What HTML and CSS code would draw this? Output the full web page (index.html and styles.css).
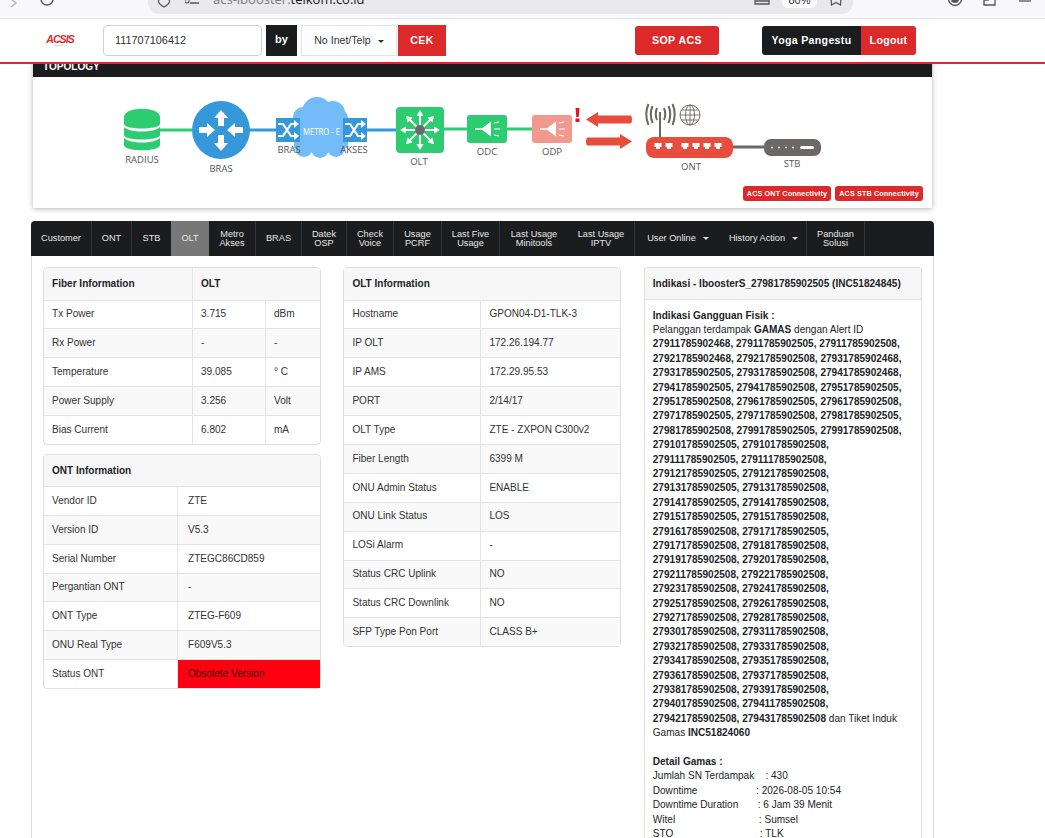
FILE: index.html
```html
<!DOCTYPE html>
<html lang="id">
<head>
<meta charset="utf-8">
<title>ACSIS - OLT</title>
<link rel="stylesheet" href="styles.css">
</head>
<body>
<div class="browser">
  <svg class="b-icon b-back" width="12" height="18" viewBox="0 0 12 18"><path d="M3 -1 L8 3 L3 7" fill="none" stroke="#b5b5ba" stroke-width="1.4"/></svg>
  <svg class="b-icon b-reload" width="16" height="18" viewBox="0 0 16 18"><circle cx="8" cy="-1" r="6" fill="none" stroke="#55555a" stroke-width="1.4"/></svg>
  <div class="urlbar">
    <svg class="b-icon b-shield" width="14" height="14" viewBox="0 0 14 14"><path d="M1.500 -2 H12.500 V1 Q12.500 4 7 7 Q1.500 4 1.500 1 Z" fill="none" stroke="#55555a" stroke-width="1.300"/></svg>
    <svg class="b-icon b-lock" width="14" height="14" viewBox="0 0 14 14"><path d="M5 3 H14 M5 -1 H10" fill="none" stroke="#55555a" stroke-width="1.300"/><circle cx="2" cy="1" r="2" fill="none" stroke="#55555a" stroke-width="1.100"/></svg>
    <span class="url"><span class="url-dim">acs-ibooster.</span>telkom.co.id</span>
    <svg class="b-icon b-reader" width="16" height="14" viewBox="0 0 16 14"><path d="M1 -2 V4 H15 V-2 M1 1 H15" fill="none" stroke="#55555a" stroke-width="1.300"/></svg>
    <span class="zoom-pill">80%</span>
    <svg class="b-icon b-star" width="14" height="14" viewBox="0 0 14 14"><path d="M2 -3 L2.500 5 L7 2.500 L11.500 5 L12 -3" fill="none" stroke="#55555a" stroke-width="1.300"/></svg>
  </div>
  <svg class="b-icon b-avatar" width="16" height="18" viewBox="0 0 16 18"><circle cx="8" cy="-1" r="6.500" fill="none" stroke="#55555a" stroke-width="1.400"/><circle cx="8" cy="-1" r="4" fill="#55555a"/></svg>
  <svg class="b-icon b-ext" width="14" height="18" viewBox="0 0 14 18"><path d="M1 0 V5 H12 V-2 M1 0 H5 V-3" fill="none" stroke="#55555a" stroke-width="1.300"/></svg>
  <svg class="b-icon b-menu" width="14" height="18" viewBox="0 0 14 18"><path d="M1 1 H13" fill="none" stroke="#55555a" stroke-width="1.300"/></svg>
</div>

<header class="topbar">
  <div class="logo"><span class="logo-text">ACSIS</span><span class="logo-sub"></span></div>
  <div class="search-input">111707106412</div>
  <div class="by">by</div>
  <div class="select">No Inet/Telp<span class="caret caret-dark"></span></div>
  <div class="btn btn-cek">CEK</div>
  <div class="btn btn-sop">SOP ACS</div>
  <div class="user">Yoga Pangestu</div>
  <div class="btn btn-logout">Logout</div>
</header>

<main class="page">
  <section class="topology">
    <h2 class="topology-title">TOPOLOGY</h2>
    <div class="topology-body">
      <svg class="diagram" width="899" height="131" viewBox="33 77 899 131">
        <defs>
          <path id="arrow" d="M0 -8 L7 0 H3 V8 H-3 V0 H-7 Z" fill="#fff"/>
          <path id="thin" d="M-1 0 V-14 H-3.500 L0 -20 L3.500 -14 H1 V0 Z" fill="#fff"/>
          <g id="switch">
            <rect x="-12" y="-12" width="24" height="24" fill="#3498db"/>
            <path d="M-10 -6 H-5 L3 6 H7 M-10 6 H-5 L3 -6 H7" fill="none" stroke="#fff" stroke-width="2.200"/>
            <path d="M6 -10 L11 -6 L6 -2 Z M6 2 L11 6 L6 10 Z" fill="#fff"/>
          </g>
          <g id="horn">
            <path d="M-12 -0.800 H-5 L4 -7.500 V7.500 L-5 0.800 H-12 Z" fill="#fff"/>
            <path d="M7 -6 L12 -7 M7 0 H13 M7 6 L12 7" stroke="#fff" stroke-width="1.100"/>
          </g>
          <path id="port" d="M-3.500 -3 H3.500 V1 H2 V3 H-2 V1 H-3.500 Z" fill="#fff"/>
        </defs>

        <path class="link-green" d="M160 130 H192"/>
        <path class="link-blue" d="M249 130 H396"/>
        <path class="link-green" d="M444 129 H532"/>
        <path class="link-gray" d="M733 147 H765"/>

        <g class="cylinder">
          <path d="M124 117 C124 106 160 106 160 117 V124 C160 130 124 130 124 124 Z"/>
          <path d="M124 127 C130 133 154 133 160 127 V135 C160 141 124 141 124 135 Z"/>
          <path d="M124 138 C130 144 154 144 160 138 V145 C160 152 124 152 124 145 Z"/>
        </g>
        <text class="label" x="142" y="163">RADIUS</text>

        <circle cx="221" cy="130" r="29" fill="#3498db"/>
        <use href="#arrow" transform="translate(221 118)"/>
        <use href="#arrow" transform="translate(221 143) rotate(180)"/>
        <use href="#arrow" transform="translate(207 130) rotate(90)"/>
        <use href="#arrow" transform="translate(235 130) rotate(-90)"/>
        <text class="label" x="221" y="172">BRAS</text>

        <g class="cloud">
          <circle cx="317" cy="112" r="15"/>
          <circle cx="303" cy="117" r="10"/>
          <circle cx="333" cy="113" r="12"/>
          <circle cx="340" cy="118" r="8"/>
          <circle cx="304" cy="148" r="9"/>
          <circle cx="320" cy="149" r="9"/>
          <circle cx="336" cy="148" r="9"/>
          <rect x="294" y="117" width="54" height="31"/>
        </g>
        <text class="metro" x="321.500" y="134.500" textLength="37" lengthAdjust="spacingAndGlyphs">METRO - E</text>
        <use href="#switch" transform="translate(288 130)"/>
        <use href="#switch" transform="translate(355 130)"/>
        <text class="label" x="289" y="153">BRAS</text>
        <text class="label" x="354" y="153">AKSES</text>

        <rect x="396" y="107" width="48" height="46" rx="4" fill="#2ecc71"/>
        <use href="#thin" transform="translate(420 130)"/>
        <use href="#thin" transform="translate(420 130) rotate(45)"/>
        <use href="#thin" transform="translate(420 130) rotate(90)"/>
        <use href="#thin" transform="translate(420 130) rotate(135)"/>
        <use href="#thin" transform="translate(420 130) rotate(180)"/>
        <use href="#thin" transform="translate(420 130) rotate(225)"/>
        <use href="#thin" transform="translate(420 130) rotate(270)"/>
        <use href="#thin" transform="translate(420 130) rotate(315)"/>
        <circle cx="420" cy="130" r="5" fill="#6a6a6a"/>
        <text class="label" x="419" y="165">OLT</text>

        <rect x="467" y="115" width="40" height="28" rx="3" fill="#2ecc71"/>
        <use href="#horn" transform="translate(487 129)"/>
        <text class="label" x="487" y="155">ODC</text>

        <rect x="532" y="115" width="40" height="28" rx="3" fill="#f1998e"/>
        <use href="#horn" transform="translate(552 129)"/>
        <text class="label" x="552" y="155">ODP</text>
        <path d="M575.500 108 H579.500 L578.700 117 H576.300 Z M575.500 118.500 H579.500 V122 H575.500 Z" fill="#e8101c"/>

        <path d="M586 119.500 L598 112 V115.500 H630 Q632 115.500 632 119.500 Q632 123.500 630 123.500 H598 V127 Z" fill="#e74c3c"/>
        <path d="M632 141.500 L620 134 V137.500 H588 Q586 137.500 586 141.500 Q586 145.500 588 145.500 H620 V149 Z" fill="#e74c3c"/>

        <g class="wifi">
          <path d="M660 138 V112"/>
          <path d="M657 108 Q654.500 114 657 120 M664 108 Q666.500 114 664 120"/>
          <path d="M652.500 106 Q649 114 652.500 123 M668.500 106 Q672 114 668.500 123"/>
          <path d="M648.500 104 Q644 114 648.500 125 M672.500 104 Q677 114 672.500 125"/>
        </g>
        <g class="globe">
          <circle cx="690" cy="115" r="10"/>
          <ellipse cx="690" cy="115" rx="4.500" ry="10"/>
          <path d="M690 105 V125 M680 115 H700 M681.500 110 H698.500 M681.500 120 H698.500"/>
        </g>
        <rect x="646" y="137" width="87" height="21" rx="8" fill="#e74c3c"/>
        <g transform="translate(658 146)"><use href="#port"/></g>
        <g transform="translate(669 146)"><use href="#port"/></g>
        <use href="#port" transform="translate(685 146)"/>
        <use href="#port" transform="translate(696 146)"/>
        <use href="#port" transform="translate(707 146)"/>
        <use href="#port" transform="translate(718 146)"/>
        <text class="label" x="691" y="170">ONT</text>

        <rect x="764" y="139" width="57" height="17" rx="7" fill="#6d6864"/>
        <circle cx="772" cy="147.500" r="1" fill="#fff"/>
        <circle cx="779" cy="147.500" r="1" fill="#fff"/>
        <circle cx="786" cy="147.500" r="1" fill="#fff"/>
        <circle cx="793" cy="147.500" r="1" fill="#fff"/>
        <rect x="800" y="146" width="14" height="3" rx="1.500" fill="#fff"/>
        <text class="label" x="792" y="167">STB</text>
      </svg>
      <div class="connect">
        <span class="connect-btn">ACS ONT Connectivity</span>
        <span class="connect-btn">ACS STB Connectivity</span>
      </div>
    </div>
  </section>

  <nav class="tabs">
    <a class="tab tab-sep">Customer</a>
    <a class="tab tab-sep">ONT</a>
    <a class="tab">STB</a>
    <a class="tab tab-active">OLT</a>
    <a class="tab tab-sep">Metro<br>Akses</a>
    <a class="tab tab-sep">BRAS</a>
    <a class="tab tab-sep">Datek<br>OSP</a>
    <a class="tab tab-sep">Check<br>Voice</a>
    <a class="tab tab-sep">Usage<br>PCRF</a>
    <a class="tab tab-sep">Last Five<br>Usage</a>
    <a class="tab">Last Usage<br>Minitools</a>
    <a class="tab tab-sep">Last Usage<br>IPTV</a>
    <a class="tab">User Online<span class="caret caret-light"></span></a>
    <a class="tab tab-sep">History Action<span class="caret caret-light"></span></a>
    <a class="tab tab-sep">Panduan<br>Solusi</a>
  </nav>

  <div class="content">
    <div class="column">
      <table class="panel fiber">
        <colgroup><col class="c-fiber-1"><col class="c-fiber-2"><col></colgroup>
        <tr class="head"><th>Fiber Information</th><th colspan="2">OLT</th></tr>
        <tr><td>Tx Power</td><td>3.715</td><td>dBm</td></tr>
        <tr><td>Rx Power</td><td>-</td><td>-</td></tr>
        <tr><td>Temperature</td><td>39.085</td><td>° C</td></tr>
        <tr><td>Power Supply</td><td>3.256</td><td>Volt</td></tr>
        <tr><td>Bias Current</td><td>6.802</td><td>mA</td></tr>
      </table>
      <table class="panel ont">
        <colgroup><col class="c-ont-1"><col></colgroup>
        <tr class="head"><th colspan="2">ONT Information</th></tr>
        <tr><td>Vendor ID</td><td>ZTE</td></tr>
        <tr><td>Version ID</td><td>V5.3</td></tr>
        <tr><td>Serial Number</td><td>ZTEGC86CD859</td></tr>
        <tr><td>Pergantian ONT</td><td>-</td></tr>
        <tr><td>ONT Type</td><td>ZTEG-F609</td></tr>
        <tr><td>ONU Real Type</td><td>F609V5.3</td></tr>
        <tr><td>Status ONT</td><td class="alert">Obsolete Version</td></tr>
      </table>
    </div>

    <div class="column">
      <table class="panel olt">
        <colgroup><col class="c-olt-1"><col></colgroup>
        <tr class="head"><th colspan="2">OLT Information</th></tr>
        <tr><td>Hostname</td><td>GPON04-D1-TLK-3</td></tr>
        <tr><td>IP OLT</td><td>172.26.194.77</td></tr>
        <tr><td>IP AMS</td><td>172.29.95.53</td></tr>
        <tr><td>PORT</td><td>2/14/17</td></tr>
        <tr><td>OLT Type</td><td>ZTE - ZXPON C300v2</td></tr>
        <tr><td>Fiber Length</td><td>6399 M</td></tr>
        <tr><td>ONU Admin Status</td><td>ENABLE</td></tr>
        <tr><td>ONU Link Status</td><td>LOS</td></tr>
        <tr><td>LOSi Alarm</td><td>-</td></tr>
        <tr><td>Status CRC Uplink</td><td>NO</td></tr>
        <tr><td>Status CRC Downlink</td><td>NO</td></tr>
        <tr><td>SFP Type Pon Port</td><td>CLASS B+</td></tr>
      </table>
    </div>

    <div class="column">
      <article class="indikasi">
        <h3 class="indikasi-head">Indikasi - IboosterS_27981785902505 (INC51824845)</h3>
        <div class="indikasi-body">
          <p><b>Indikasi Gangguan Fisik :</b><br>
          Pelanggan terdampak <b>GAMAS</b> dengan Alert ID <b>27911785902468, 27911785902505, 27911785902508, 27921785902468, 27921785902508, 27931785902468, 27931785902505, 27931785902508, 27941785902468, 27941785902505, 27941785902508, 27951785902505, 27951785902508, 27961785902505, 27961785902508, 27971785902505, 27971785902508, 27981785902505, 27981785902508, 27991785902505, 27991785902508, 279101785902505, 279101785902508, 279111785902505, 279111785902508, 279121785902505, 279121785902508, 279131785902505, 279131785902508, 279141785902505, 279141785902508, 279151785902505, 279151785902508, 279161785902508, 279171785902505, 279171785902508, 279181785902508, 279191785902508, 279201785902508, 279211785902508, 279221785902508, 279231785902508, 279241785902508, 279251785902508, 279261785902508, 279271785902508, 279281785902508, 279301785902508, 279311785902508, 279321785902508, 279331785902508, 279341785902508, 279351785902508, 279361785902508, 279371785902508, 279381785902508, 279391785902508, 279401785902508, 279411785902508, 279421785902508, 279431785902508</b> dan Tiket Induk Gamas <b>INC51824060</b></p>
          <p class="detail"><b>Detail Gamas :</b>
Jumlah SN Terdampak    : 430
Downtime                     : 2026-08-05 10:54
Downtime Duration       : 6 Jam 39 Menit
Witel                              : Sumsel
STO                               : TLK</p>
        </div>
      </article>
    </div>
  </div>
</main>
</body>
</html>
```
FILE: styles.css
```css
* { box-sizing: border-box; }
html, body { margin: 0; padding: 0; height: 100%; overflow: hidden; }
body { background: #fff; color: #212529; font-family: "Liberation Sans", Arial, sans-serif; font-size: 10.050px; line-height: 14.400px; }

/* browser strip */
.browser { height: 19px; background: #f9f9fb; border-bottom: 1px solid #e0e0e6; display: flex; align-items: flex-start; overflow: hidden; }
.b-icon { flex: none; display: block; }
.b-back { margin-left: 8px; }
.b-reload { margin-left: 19px; }
.urlbar { width: 705px; height: 14px; margin-left: 93px; padding-right: 10px; background: #e9e9ed; border-radius: 0 0 11px 11px; display: flex; align-items: flex-start; overflow: hidden; }
.b-shield { margin-left: 9px; }
.b-lock { margin-left: 14px; }
.url { margin: -10px 0 0 14px; font: 13px/18px "Open Sans", "Liberation Sans", sans-serif; color: #17171a; white-space: nowrap; }
.url-dim { color: #7a7a80; }
.b-reader { margin-left: auto; }
.zoom-pill { margin-left: 12px; width: 35px; height: 8px; background: #fff; border-radius: 0 0 6px 6px; text-align: center; font: 11px/0 "Liberation Sans", sans-serif; color: #333; overflow: hidden; }
.b-star { margin-left: 12px; }
.b-avatar { margin-left: 94px; }
.b-ext { margin-left: 20px; }
.b-menu { margin-left: 21px; }

/* top bar */
.topbar { position: relative; z-index: 2; height: 45px; background: #fff; border-bottom: 2px solid #dc2a2a; display: flex; align-items: flex-start; font-weight: bold; font-size: 10.600px; }
.logo { width: 26px; margin: 15px 0 0 47px; display: flex; flex-direction: column; align-items: center; }
.logo-text { font: italic bold 10.500px/11px "Liberation Sans", sans-serif; letter-spacing: -.9px; color: #dc2a2a; white-space: nowrap; }
.logo-sub { width: 13px; height: 1px; background: #ddd; }
.search-input { width: 159px; height: 31px; margin: 6px 0 0 30px; padding-left: 11px; border: 1px solid #ced0d2; border-radius: 4px; font-size: 10.900px; font-weight: normal; line-height: 29px; color: #333; }
.by { width: 31px; height: 31px; margin: 6px 0 0 4px; background: #1b1c1e; color: #fff; text-align: center; line-height: 29px; font-size: 11px; }
.select { width: 96px; height: 31px; margin: 6px 0 0 4px; border: 1px solid #e2e3e4; font-weight: normal; line-height: 29px; text-align: center; color: #333; }
.btn { background: #dc2a2a; color: #fff; text-align: center; letter-spacing: .03em; }
.btn-cek { width: 48px; height: 31px; margin: 6px 0 0 1px; line-height: 31px; }
.btn-sop { width: 84px; height: 29px; margin: 7px 0 0 189px; line-height: 29px; border-radius: 3px; letter-spacing: .04em; }
.user { width: 99px; height: 29px; margin: 7px 0 0 43px; background: #1b1c1e; color: #fff; text-align: center; line-height: 29px; border-radius: 3px 0 0 3px; letter-spacing: .03em; }
.btn-logout { width: 55px; height: 29px; margin-top: 7px; line-height: 29px; border-radius: 0 3px 3px 0; }
.caret { display: inline-block; width: 0; height: 0; margin-left: 7px; vertical-align: 1px; border-left: 3.500px solid transparent; border-right: 3.500px solid transparent; border-top: 3.500px solid; }
.caret-dark { color: #333; }
.caret-light { color: #ddd; }

/* page */
.page { padding: 0 0 0 31px; width: 934px; }

.topology { width: 899px; margin: -7px 0 0 2px; box-shadow: 0 1px 5px rgba(0,0,0,.3); }
.topology-title { margin: 0; height: 20px; padding: 3px 0 0 10px; background: #1b1c1e; color: #fff; font-size: 10.050px; line-height: 14px; font-weight: bold; }
.topology-body { position: relative; height: 131px; background: #fff; }
.diagram { display: block; }
.label { font: 9.500px "Open Sans", "Liberation Sans", sans-serif; fill: #555; text-anchor: middle; }
.metro { font: 9.500px "Open Sans", "Liberation Sans", sans-serif; fill: #fff; text-anchor: middle; }
.link-green, .link-blue, .link-gray { fill: none; stroke-width: 3; }
.link-green { stroke: #2ecc71; }
.link-blue { stroke: #3498db; }
.link-gray { stroke: #6d6864; }
.cylinder { fill: #2ecc71; }
.cloud { fill: #74bcf9; }
.wifi { fill: none; stroke: #6d6864; stroke-width: 2; }
.globe { fill: none; stroke: #6d6864; stroke-width: .9; }
.connect { position: absolute; right: 9px; bottom: 7px; display: flex; gap: 4px; }
.connect-btn { width: 88px; height: 15px; background: #dc2a2a; border-radius: 3px; color: #fff; font-size: 7.200px; font-weight: bold; line-height: 15px; text-align: center; white-space: nowrap; letter-spacing: .02em; }

/* tabs */
.tabs { margin-top: 13px; width: 903px; height: 35px; background: #1b1c1e; border-radius: 4px 4px 0 0; display: grid; grid-template-columns: 61px 40px 39px 38px 47px 46px 45px 47px 48px 58px 68px 67px 86px 86px 58px 1fr; color: #e6e6e6; font-size: 9.200px; line-height: 9px; }
.tab { display: flex; flex-wrap: wrap; align-items: center; align-content: center; justify-content: center; text-align: center; }
.tab br { flex-basis: 100%; }
.tab-sep { border-right: 1px solid #33363a; }
.tab-active { background: #777; }

/* content */
.content { width: 903px; height: 582px; border-left: 1px solid #ddd; border-right: 1px solid #ddd; padding: 11px 0 0 11px; display: grid; grid-template-columns: 278px 278px 278px; column-gap: 22.400px; align-items: start; overflow: hidden; }
.column { display: flex; flex-direction: column; gap: 9px; }
.panel { width: 278px; table-layout: fixed; border-collapse: separate; border-spacing: 0; border: 1px solid #dfdfdf; border-radius: 4px; font-size: 10.050px; line-height: 14.400px; }
.panel th { height: 31.500px; padding: 0 8px; text-align: left; font-weight: bold; background: #f7f7f7; border-left: 1px solid #e4e4e4; }
.panel th:first-child, .panel td:first-child { border-left: 0; }
.panel .head th:first-child { border-radius: 3px 0 0 0; }
.panel .head th:last-child { border-radius: 0 3px 0 0; }
.panel td { height: 28.900px; padding: 0 8px; border-top: 1px solid #e4e4e4; border-left: 1px solid #e4e4e4; color: #333; }
.panel.ont td { height: 28.750px; }
.panel tr:nth-child(odd) td { background: #f9f9f9; }
.panel tr:last-child td:first-child { border-radius: 0 0 0 3px; }
.c-fiber-1 { width: 148px; }
.c-fiber-2 { width: 73px; }
.c-ont-1 { width: 133px; }
.c-olt-1 { width: 136px; }
.ont td:last-child { padding-left: 10px; }
.panel td.alert { background: #ff0010; color: #3a0006; }

.indikasi { border: 1px solid #dfdfdf; border-radius: 4px 4px 0 0; border-bottom: 0; }
.indikasi-head { margin: 0; height: 32px; padding: 0 8px; background: #f7f7f7; border-bottom: 1px solid #e4e4e4; font-size: 10.050px; line-height: 31px; font-weight: bold; white-space: nowrap; border-radius: 3px 3px 0 0; }
.indikasi-body { padding: 8.500px 8px 0; color: #212529; }
.indikasi-body p { margin: 0; }
.indikasi-body .detail { margin-top: 14.400px; white-space: pre; }
```
